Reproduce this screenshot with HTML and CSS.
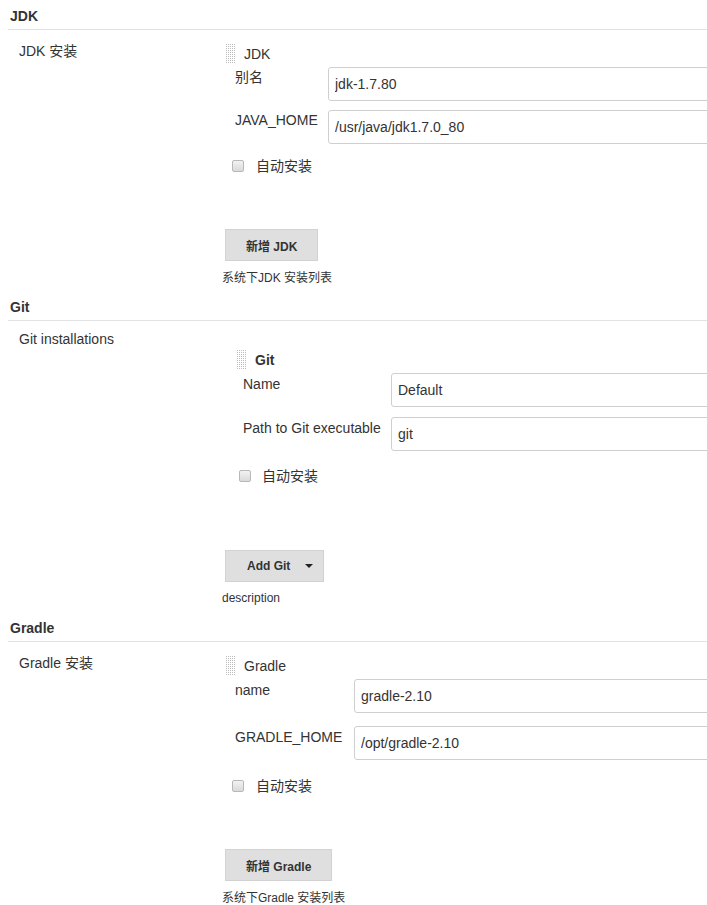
FILE: index.html
```html
<!DOCTYPE html>
<html lang="zh">
<head>
<meta charset="utf-8">
<title>Global Tool Configuration</title>
<link rel="stylesheet" href="styles.css">
</head>
<body>
<div class="page">

  <section class="sec sec-jdk">
    <h2 class="sec-title">JDK</h2>
    <div class="sec-row">
      <div class="sec-label">JDK 安装</div>
      <div class="sec-body">
        <div class="chunk">
          <div class="chunk-head"><span class="grip"></span><span class="chunk-name">JDK</span></div>
          <div class="fields">
            <label class="f-label">别名</label>
            <input class="f-input" type="text" value="jdk-1.7.80">
            <label class="f-label">JAVA_HOME</label>
            <input class="f-input" type="text" value="/usr/java/jdk1.7.0_80">
          </div>
          <div class="check-row"><span class="cb"></span><span>自动安装</span></div>
        </div>
        <button class="btn" type="button">新增 JDK</button>
        <div class="desc">系统下JDK 安装列表</div>
      </div>
    </div>
  </section>

  <section class="sec sec-git">
    <h2 class="sec-title">Git</h2>
    <div class="sec-row">
      <div class="sec-label">Git installations</div>
      <div class="sec-body">
        <div class="chunk">
          <div class="chunk-head"><span class="grip"></span><span class="chunk-name">Git</span></div>
          <div class="fields">
            <label class="f-label">Name</label>
            <input class="f-input" type="text" value="Default">
            <label class="f-label">Path to Git executable</label>
            <input class="f-input" type="text" value="git">
          </div>
          <div class="check-row"><span class="cb"></span><span>自动安装</span></div>
        </div>
        <button class="btn btn-menu" type="button"><span>Add Git</span><span class="caret"></span></button>
        <div class="desc">description</div>
      </div>
    </div>
  </section>

  <section class="sec sec-gradle">
    <h2 class="sec-title">Gradle</h2>
    <div class="sec-row">
      <div class="sec-label">Gradle 安装</div>
      <div class="sec-body">
        <div class="chunk">
          <div class="chunk-head"><span class="grip"></span><span class="chunk-name">Gradle</span></div>
          <div class="fields">
            <label class="f-label">name</label>
            <input class="f-input" type="text" value="gradle-2.10">
            <label class="f-label">GRADLE_HOME</label>
            <input class="f-input" type="text" value="/opt/gradle-2.10">
          </div>
          <div class="check-row"><span class="cb"></span><span>自动安装</span></div>
        </div>
        <button class="btn" type="button">新增 Gradle</button>
        <div class="desc">系统下Gradle 安装列表</div>
      </div>
    </div>
  </section>

</div>
</body>
</html>
```

FILE: styles.css
```css
html, body {
  margin: 0;
  padding: 0;
  background: #fff;
  overflow: hidden;
}

body {
  font-family: "Liberation Sans", Arial, "Noto Sans CJK SC", sans-serif;
  font-size: 14px;
  color: #333;
}

.page {
  width: 707px;
}

.sec-title {
  margin: 0 0 0 8px;
  padding: 6px 2px 3px;
  font-size: 14px;
  line-height: 20px;
  font-weight: bold;
  color: #333;
  border-bottom: 1px solid #e2e2e2;
}

.sec-row {
  display: grid;
  grid-template-columns: 214px 1fr;
  margin-left: 8px;
}

.sec-label {
  padding-left: 11px;
  padding-top: 11px;
  line-height: 20px;
}

.sec-body {
  padding-top: 14px;
  min-width: 0;
}

.chunk-head {
  display: flex;
  align-items: center;
  gap: 8px;
  height: 20px;
  margin-left: 4px;
}

.grip {
  flex: 0 0 10px;
  width: 10px;
  height: 20px;
  background:
    linear-gradient(90deg, transparent 1px, #fff 1px) 0 0 / 2px 2px,
    linear-gradient(transparent 1px, #fff 1px) 0 0 / 2px 2px,
    #bdbdbd;
}

.chunk-name {
  line-height: 20px;
}

.fields {
  display: grid;
  grid-template-columns: 93px 1fr;
  row-gap: 9px;
  margin: 3px -30px 0 13px;
  align-items: start;
}

.f-label {
  line-height: 18px;
  padding-top: 1px;
  white-space: nowrap;
}

.f-input {
  box-sizing: border-box;
  height: 34px;
  width: 100%;
  margin: 0;
  padding: 0 6px;
  border: 1px solid #cfcfcf;
  border-radius: 3px;
  font-family: "Liberation Sans", Arial, sans-serif;
  font-size: 14px;
  color: #333;
  background: #fff;
  outline: none;
}

.check-row {
  display: flex;
  align-items: center;
  gap: 12px;
  height: 20px;
  margin: 12px 0 0 10px;
  line-height: 20px;
}

.cb {
  box-sizing: border-box;
  flex: 0 0 12px;
  width: 12px;
  height: 12px;
  border: 1px solid #b8b8b8;
  border-radius: 2px;
  background: linear-gradient(#f2f2f2, #d9d9d9);
}

.btn {
  display: flex;
  align-items: center;
  box-sizing: border-box;
  height: 32px;
  margin: 53px 0 0 3px;
  padding: 0 20px;
  border: 1px solid #d2d2d2;
  border-radius: 0;
  background: #dfdfdf;
  font-family: "Liberation Sans", Arial, "Noto Sans CJK SC", sans-serif;
  font-size: 12px;
  font-weight: bold;
  color: #333;
}

.btn-menu {
  padding: 0 10px 0 21px;
  gap: 15px;
}

.caret {
  width: 0;
  height: 0;
  border-left: 4px solid transparent;
  border-right: 4px solid transparent;
  border-top: 4px solid #222;
}

.desc {
  margin-top: 9px;
  font-size: 12px;
  line-height: 16px;
}

/* Git */
.sec-git { margin-top: 5px; }
.sec-git .sec-label { padding-top: 8px; }
.sec-git .sec-body { padding-top: 29px; }
.sec-git .chunk-head { margin-left: 15px; }
.sec-git .chunk-name { font-weight: bold; }
.sec-git .fields {
  grid-template-columns: 148px 1fr;
  row-gap: 10px;
  margin-left: 21px;
}
.sec-git .f-label { padding-top: 2px; }
.sec-git .check-row { margin: 15px 0 0 17px; gap: 11px; }
.sec-git .btn { margin-top: 64px; }
.sec-git .desc { margin-top: 8px; }

/* Gradle */
.sec-gradle { margin-top: 6px; }
.sec-gradle .fields {
  grid-template-columns: 119px 1fr;
  row-gap: 13px;
}
.sec-gradle .f-label { padding-top: 2px; }
.sec-gradle .check-row { margin-top: 16px; }
```
